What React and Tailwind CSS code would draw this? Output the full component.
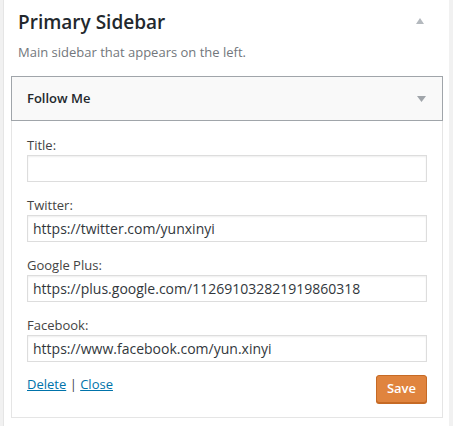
import React from 'react';

const fields = [
  { label: 'Title:', value: '' },
  { label: 'Twitter:', value: 'https://twitter.com/yunxinyi' },
  { label: 'Google Plus:', value: 'https://plus.google.com/112691032821919860318' },
  { label: 'Facebook:', value: 'https://www.facebook.com/yun.xinyi' },
];

const App = () => {
  return (
    <div className="w-[453px] h-[426px] bg-[#f1f1f1] pl-[3px] pr-[4px] overflow-hidden font-['Open_Sans',sans-serif]">
      <div className="h-full bg-white border-l border-[#e5e5e5] px-[7px]">
        {/* Sidebar header */}
        <div className="flex items-start justify-between pl-[7px] pr-[18px] pt-[10px]">
          <h2 className="text-[19px] leading-[24px] font-semibold text-[#23282d]">Primary Sidebar</h2>
          <svg width="8" height="6" viewBox="0 0 8 6" className="mt-[8px]">
            <path d="M4 0 L8 6 L0 6 Z" fill="#b4b9be" />
          </svg>
        </div>
        <p className="pl-[7px] mt-[9px] text-[13px] leading-[18px] text-[#72777c]">
          Main sidebar that appears on the left.
        </p>

        {/* Widget */}
        <div className="mt-[15px] w-[432px]">
          <div className="flex items-center justify-between h-[45px] bg-[#f9f9f9] border border-[#a0a5aa] pl-[15px] pr-[16px]">
            <h3 className="text-[13px] font-semibold text-[#23282d]">Follow Me</h3>
            <svg width="9" height="6" viewBox="0 0 9 6">
              <path d="M0 0 L9 0 L4.5 6 Z" fill="#a0a5aa" />
            </svg>
          </div>
          <div className="border-x border-b border-[#e5e5e5] px-[15px] pt-[14px] pb-[14px]">
            {fields.map((f) => (
              <div key={f.label} className="mb-[13px]">
                <label className="block text-[13px] leading-[20px] text-[#444]">{f.label}</label>
                <input
                  type="text"
                  defaultValue={f.value}
                  className="block w-full h-[27px] border border-[#ddd] shadow-[inset_0_1px_2px_rgba(0,0,0,0.07)] px-[5px] text-[14px] text-[#32373c] outline-none"
                />
              </div>
            ))}
            <div className="flex items-start justify-between">
              <div className="text-[13px] leading-[18px] text-[#444]">
                <a href="#" className="underline text-[#0073aa]">Delete</a>
                <span> | </span>
                <a href="#" className="underline text-[#0073aa]">Close</a>
              </div>
              <button className="h-[28px] px-[10px] rounded-[3px] bg-[#e0843e] border border-[#c66a25] shadow-[0_1px_0_#c66a25] text-white text-[13px] font-semibold">
                Save
              </button>
            </div>
          </div>
        </div>
      </div>
    </div>
  );
};

export default App;
